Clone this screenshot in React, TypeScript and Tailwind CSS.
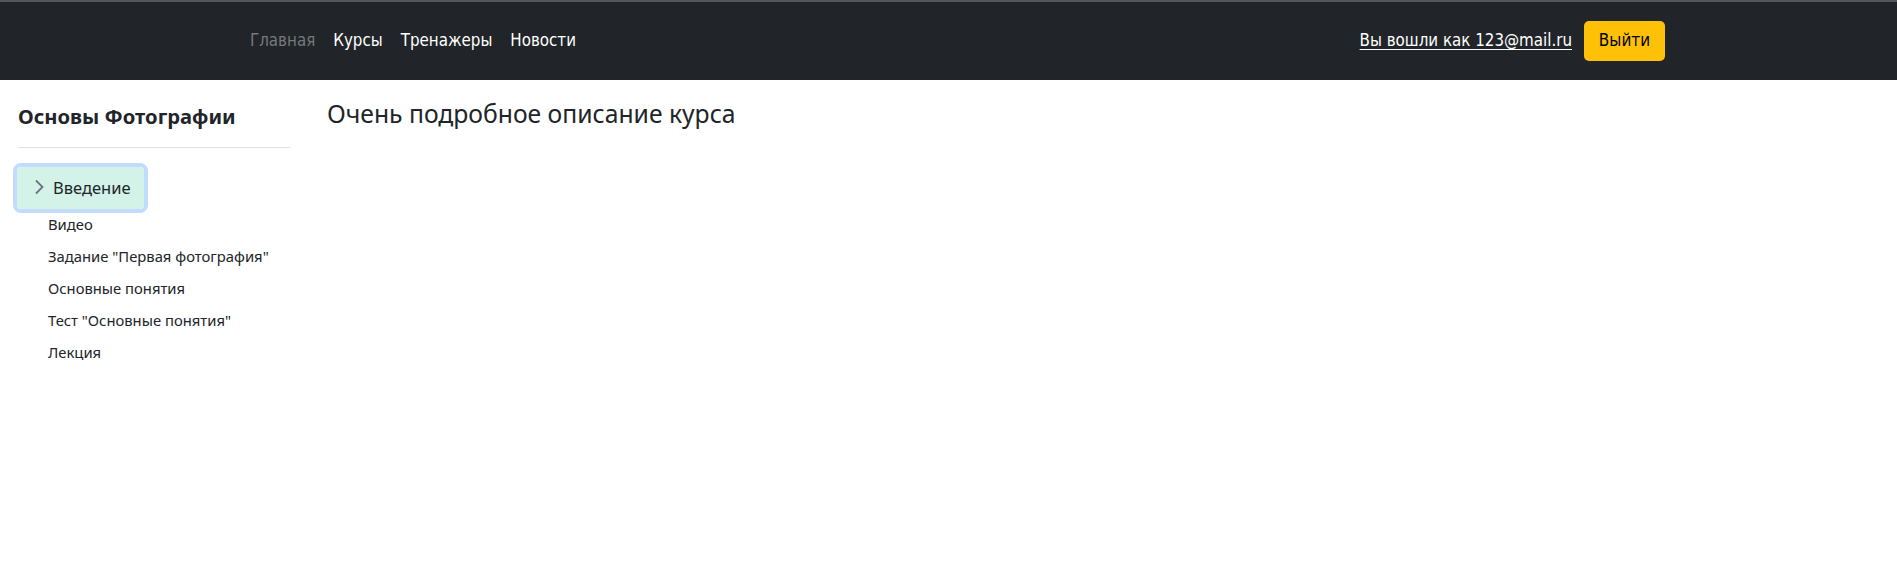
import React from "react";

const lessons = [
  "Видео",
  'Задание "Первая фотография"',
  "Основные понятия",
  'Тест "Основные понятия"',
  "Лекция",
];

const navLinks = [
  { label: "Главная", active: false },
  { label: "Курсы", active: true },
  { label: "Тренажеры", active: true },
  { label: "Новости", active: true },
];

export default function App() {
  return (
    <div className="min-h-[563px] bg-white font-['Noto_Sans',sans-serif] text-[#212529]">
      {/* шапка */}
      <header className="h-[80px] bg-[#212529] border-t-2 border-[#53575b] flex items-center justify-between pl-[250px] pr-[232px] font-['DejaVu_Sans_Condensed','DejaVu_Sans',sans-serif] text-[16.8px]">
        <nav className="flex items-center gap-[18px]">
          {navLinks.map((l) => (
            <a
              key={l.label}
              href="#"
              className={l.active ? "text-white" : "text-[#75787b]"}
            >
              {l.label}
            </a>
          ))}
        </nav>
        <div className="flex items-center gap-[12px]">
          <a href="#" className="text-white underline underline-offset-[3px]">
            Вы вошли как 123@mail.ru
          </a>
          <button className="h-[40px] w-[81px] rounded-[5px] bg-[#ffc107] text-black text-[17px]">
            Выйти
          </button>
        </div>
      </header>

      <div className="flex">
        {/* боковая панель курса */}
        <aside className="w-[290px] pl-[18px] pt-[21px] shrink-0">
          <h5 className="text-[20.2px] font-bold leading-[1.5] text-[#212529]">
            Основы Фотографии
          </h5>
          <hr className="mt-[16px] border-t border-[#dee2e6]" />
          <div className="mt-[15px] -ml-[5px]">
            <div className="inline-flex rounded-[8px] border-[4px] border-[#c2dbfe]">
              <div className="flex items-center gap-[9px] h-[42px] pl-[17px] pr-[13px] rounded-[4px] bg-[#d3f3e9] text-[16.5px]">
                <svg width="10" height="16" viewBox="0 0 10 16" fill="none" className="-mt-[3px]">
                  <path d="M2 1.5L8.5 8L2 14.5" stroke="#6c757d" strokeWidth="1.8" />
                </svg>
                <span>Введение</span>
              </div>
            </div>
          </div>
          <ul className="-mt-[5px] pl-[30px] flex flex-col text-[14.8px]">
            {lessons.map((t) => (
              <li key={t} className="h-[32px] flex items-center">
                {t}
              </li>
            ))}
          </ul>
        </aside>

        {/* основное содержимое */}
        <main className="pl-[37px] pt-[19px]">
          <h4 className="text-[24.7px] leading-[1.2] text-[#212529]">
            Очень подробное описание курса
          </h4>
        </main>
      </div>
    </div>
  );
}
